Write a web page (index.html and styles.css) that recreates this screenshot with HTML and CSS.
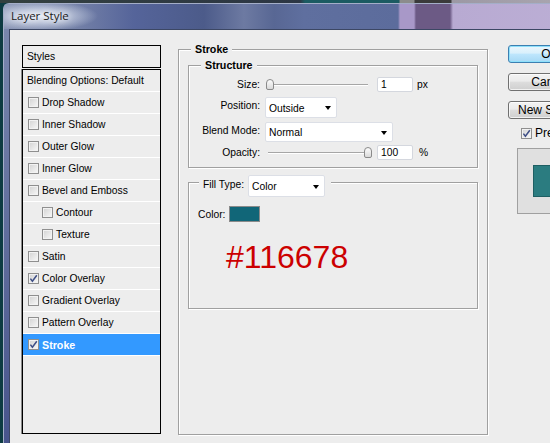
FILE: index.html
```html
<!DOCTYPE html>
<html>
<head>
<meta charset="utf-8">
<title>Layer Style</title>
<link rel="stylesheet" href="styles.css">
</head>
<body>
<div class="window">
  <div class="titlebar"><span class="title">Layer Style</span></div>
  <div class="frame">
    <div class="client">
      <div class="side">
        <div class="styles-head">Styles</div>
        <div class="style-list">
          <div class="row plain">Blending Options: Default</div>
          <div class="row"><span class="cb"></span>Drop Shadow</div>
          <div class="row"><span class="cb"></span>Inner Shadow</div>
          <div class="row"><span class="cb"></span>Outer Glow</div>
          <div class="row"><span class="cb"></span>Inner Glow</div>
          <div class="row"><span class="cb"></span>Bevel and Emboss</div>
          <div class="row sub"><span class="cb"></span>Contour</div>
          <div class="row sub"><span class="cb"></span>Texture</div>
          <div class="row"><span class="cb"></span>Satin</div>
          <div class="row"><span class="cb"><svg width="9" height="9" viewBox="0 0 9 9"><path d="M1.4 4.6 L3.4 7.2 L7.8 1.2" fill="none" stroke="#3f4f86" stroke-width="1.5"/></svg></span>Color Overlay</div>
          <div class="row"><span class="cb"></span>Gradient Overlay</div>
          <div class="row"><span class="cb"></span>Pattern Overlay</div>
          <div class="row selected"><span class="cb"><svg width="9" height="9" viewBox="0 0 9 9"><path d="M1.4 4.6 L3.4 7.2 L7.8 1.2" fill="none" stroke="#3f4f86" stroke-width="1.5"/></svg></span>Stroke</div>
        </div>
      </div>

      <div class="main">
        <div class="group stroke-group">
          <div class="legend">Stroke</div>
          <div class="group structure">
            <div class="legend">Structure</div>
            <div class="frow size-row">
              <span class="lbl">Size:</span>
              <div class="slider-wrap size-wrap"><div class="slider"><span class="thumb"></span></div></div>
              <div class="input">1</div>
              <span class="unit">px</span>
            </div>
            <div class="frow pos-row">
              <span class="lbl up">Position:</span>
              <div class="select pos-select">Outside<i class="arrow"></i></div>
            </div>
            <div class="frow blend-row">
              <span class="lbl up">Blend Mode:</span>
              <div class="select blend-select">Normal<i class="arrow"></i></div>
            </div>
            <div class="frow opacity-row">
              <span class="lbl">Opacity:</span>
              <div class="slider-wrap opacity-wrap"><div class="slider end"><span class="thumb"></span></div></div>
              <div class="input">100</div>
              <span class="unit pct">%</span>
            </div>
          </div>
          <div class="group fill">
            <div class="legend fill-legend">
              <span class="fill-lbl">Fill Type:</span>
              <div class="select fill-select">Color<i class="arrow"></i></div>
            </div>
            <div class="color-row">
              <span class="color-lbl">Color:</span>
              <span class="swatch"></span>
            </div>
            <div class="hex">#116678</div>
          </div>
        </div>
      </div>

      <div class="buttons">
        <div class="btn default">OK</div>
        <div class="btn">Cancel</div>
        <div class="btn">New Style...</div>
        <div class="preview-row">
          <span class="cb"><svg width="9" height="9" viewBox="0 0 9 9"><path d="M1.4 4.6 L3.4 7.2 L7.8 1.2" fill="none" stroke="#3f4f86" stroke-width="1.5"/></svg></span>Preview
        </div>
        <div class="preview-box"><div class="preview-swatch"></div></div>
      </div>
    </div>
  </div>
</div>
</body>
</html>
```

FILE: styles.css
```css
* { box-sizing: border-box; }

html, body { margin: 0; padding: 0; }

body {
  width: 550px;
  height: 443px;
  overflow: hidden;
  background:
    linear-gradient(to right, #33403f 0, #2c3644 300px, #1b5b62 305px, #1b5b62 399px, #8c8c8c 400px, #8c8c8c 414px, #3a3a3a 415px, #3a3a3a 451px, #9c98a4 452px, #a8a4ae 550px) top left / 550px 3px no-repeat,
    #0d3b42;
  font-family: "Liberation Sans", Arial, sans-serif;
  font-size: 10.3px;
  color: #000;
}

.window {
  margin: 3px 0 0 3px;
  width: 620px;
  height: 470px;
  border-top: 1px solid #a4aec8;
  border-left: 1px solid #a4aec8;
  border-radius: 6px 0 0 0;
  background: linear-gradient(#7b89ae, #44518a);
  overflow: hidden;
}

.titlebar {
  height: 25px;
  padding: 4px 0 0 7px;
  background:
    radial-gradient(ellipse 58px 15px at 36px 12px, rgba(236,240,248,0.95) 0, rgba(214,222,238,0.7) 45%, rgba(190,200,225,0) 100%),
    linear-gradient(to right, #8a96b5 0, #7582a8 70px, #55649a 130px, #4c5b8a 200px, #6d7aa2 240px, #586794 270px, #5f6f9f 300px, #5c6c9c 394px, #a898c8 396px, #a898c8 410px, #6c5a85 412px, #6c5a85 446px, #b8aad2 449px, #bdb0d6 620px);
}

.title {
  font-family: "Open Sans", "Liberation Sans", sans-serif;
  font-size: 11.5px;
  line-height: 16px;
  color: #1a1a1a;
  text-shadow: 0 0 6px #fff, 0 0 10px rgba(255,255,255,0.8);
}

.frame { padding-left: 5px; }

.client {
  height: 445px;
  border-top: 1px solid #3c4764;
  border-left: 1px solid #3c4764;
  background: #ededed;
  display: flex;
  align-items: flex-start;
  padding: 15px 0 0 12px;
}

/* ---------- left list ---------- */
.side { width: 139px; flex: none; }

.styles-head {
  height: 23px;
  border: 1px solid #000;
  padding-left: 4px;
  display: flex;
  align-items: center;
  padding-bottom: 1px;
}

.style-list {
  margin-top: 1px;
  height: 365px;
  border: 1px solid #000;
  box-shadow: -1px 0 0 #8a8a8a;
}

.row {
  height: 22px;
  border-bottom: 1px solid #fff;
  display: flex;
  align-items: center;
  padding-left: 5px;
  white-space: nowrap;
}
.row.plain { padding-left: 4px; }
.row.sub { padding-left: 19px; }
.row.selected {
  background: #3399ff;
  color: #fff;
  font-weight: bold;
  font-size: 10.7px;
}

.cb {
  width: 11px;
  height: 11px;
  flex: none;
  border: 1px solid #8f8f8f;
  background: linear-gradient(135deg, #d2d2d2, #f8f8f8);
  box-shadow: inset 0 0 0 1px #f2f2f2;
  display: flex;
  align-items: center;
  justify-content: center;
  margin-right: 3px;
}
.cb svg { display: block; }

/* ---------- main groups ---------- */
.main { width: 310px; margin-left: 17px; flex: none; margin-top: 4px; }

.group {
  border: 1px solid #a0a0a0;
  box-shadow: inset 1px 1px 0 #fff, 1px 1px 0 #fff;
}

.stroke-group { height: 386px; }

.legend {
  width: fit-content;
  margin: -7px 0 0 12px;
  padding: 0 4px;
  background: #ededed;
  line-height: 13px;
  font-weight: bold;
  font-size: 10.7px;
}

.structure {
  width: 290px;
  height: 103px;
  margin: 9px 0 0 9px;
}

.frow { display: flex; align-items: center; }
.size-row { height: 17px; margin-top: 4px; }
.pos-row { height: 21px; margin-top: 4px; }
.blend-row { height: 20px; margin-top: 4px; }
.opacity-row { height: 15px; margin-top: 3px; }

.lbl { width: 71px; text-align: right; flex: none; }
.lbl.up { padding-bottom: 4px; }

.slider-wrap { width: 117px; flex: none; }
.size-wrap { padding-left: 6px; }
.size-wrap .slider { width: 102px; }
.opacity-wrap { padding-left: 8px; }
.opacity-wrap .slider { width: 104px; }

.slider {
  height: 11px;
  display: flex;
  background:
    linear-gradient(#a6a6a6, #a6a6a6) left 5px / 100% 1px no-repeat,
    linear-gradient(#ffffff, #ffffff) left 6px / 100% 1px no-repeat;
}
.slider.end { justify-content: flex-end; }
.thumb {
  width: 8px;
  height: 11px;
  border: 1px solid #8a8a8a;
  border-radius: 4px 4px 2px 2px;
  background: linear-gradient(#fdfdfd, #d9d9d9);
}

.input {
  width: 36px;
  height: 15px;
  flex: none;
  background: #fff;
  border: 1px solid #d4d7de;
  border-radius: 2px;
  padding-left: 3px;
  line-height: 13px;
}

.unit { margin-left: 4px; }
.unit.pct { margin-left: 6px; }

.select {
  flex: none;
  background: #fff;
  border: 1px solid #dcdfe6;
  border-radius: 2px;
  display: flex;
  align-items: center;
  justify-content: space-between;
  padding: 1px 5px 0 3px;
}
.pos-select { width: 72px; height: 21px; margin-left: 5px; }
.blend-select { width: 128px; height: 20px; margin-left: 5px; }
.fill-select { width: 77px; height: 22px; margin-left: 4px; }

.arrow {
  width: 0;
  height: 0;
  border-left: 3.5px solid transparent;
  border-right: 3.5px solid transparent;
  border-top: 4px solid #000;
}

.fill {
  width: 290px;
  height: 127px;
  margin: 14px 0 0 9px;
}

.fill-legend {
  display: flex;
  align-items: center;
  height: 22px;
  margin: -8px 0 0 10px;
  padding: 0 6px 0 4px;
  font-weight: normal;
  font-size: 10.3px;
}
.fill-lbl { padding-bottom: 4px; }

.color-row {
  height: 16px;
  margin-top: 9px;
  padding-left: 9px;
  display: flex;
  align-items: center;
}
.swatch {
  width: 31px;
  height: 16px;
  margin-left: 4px;
  background: #116678;
  border: 1px solid #8a8a8a;
}

.hex {
  margin-top: 17px;
  padding-left: 37px;
  font-size: 32px;
  line-height: 36px;
  color: #cc0000;
}

/* ---------- buttons ---------- */
.buttons { width: 84px; margin-left: 20px; flex: none; }

.btn {
  height: 18px;
  border: 1px solid #707070;
  border-radius: 3px;
  background: linear-gradient(#f3f3f3 0, #ebebeb 45%, #dddddd 50%, #cfcfcf 100%);
  box-shadow: inset 0 0 0 1px rgba(255,255,255,0.7);
  font-size: 12px;
  line-height: 16px;
  text-align: center;
  white-space: nowrap;
}
.btn + .btn { margin-top: 10px; }
.btn.default {
  border-color: #3c7fb1;
  background: linear-gradient(#eaf6fd 0, #d9f0fc 45%, #bee6fd 50%, #a7d9f5 100%);
  box-shadow: inset 0 0 0 1px #8ee0fb;
}

.preview-row {
  height: 12px;
  margin-top: 8px;
  padding-left: 13px;
  display: flex;
  align-items: center;
  font-size: 12px;
}

.preview-box {
  width: 62px;
  height: 66px;
  margin: 9px 0 0 9px;
  border: 1px solid #a0a0a0;
  background: #e0e0e0;
  padding: 16px 0 0 15px;
}
.preview-swatch {
  width: 30px;
  height: 32px;
  background: #2b7c80;
  border: 1px solid #1e5f63;
}
```
